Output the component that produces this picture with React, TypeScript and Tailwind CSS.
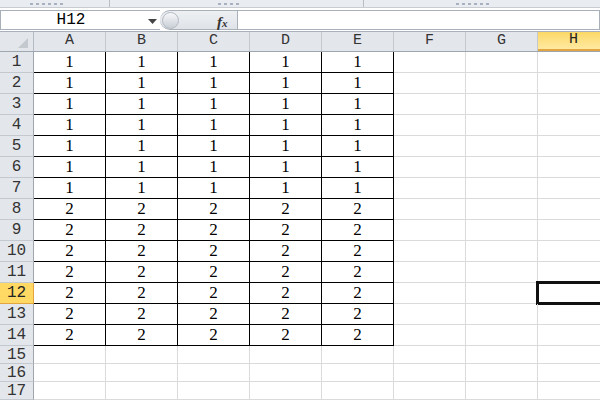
import React from "react";

const cols = ["A", "B", "C", "D", "E", "F", "G", "H"];
const rows = Array.from({ length: 17 }, (_, i) => i + 1);

const MONO = '"Liberation Mono", "Courier New", "DejaVu Sans Mono", monospace';
const SERIF = '"Liberation Serif", "Times New Roman", "DejaVu Serif", serif';

function Marks({ left, n }: { left: number; n: number }) {
  return (
    <div className="absolute top-[3px] flex gap-[3px]" style={{ left }}>
      {Array.from({ length: n }, (_, i) => (
        <div key={i} className="w-[3px] h-[2px] bg-[#a8b1bf]" />
      ))}
    </div>
  );
}

export default function App() {
  return (
    <div className="w-[600px] h-[400px] overflow-hidden bg-white relative" style={{ fontFamily: MONO }}>
      {/* top strip */}
      <div className="h-[8px] flex bg-[#e9ecf1] border-b border-[#c9cdd3] overflow-hidden">
        <div className="w-[110px] border-r border-[#b8bec6] relative">
          <Marks left={30} n={6} />
        </div>
        <div className="w-[2px]" />
        <div className="w-[252px] border-r border-[#b8bec6] relative">
          <Marks left={106} n={4} />
        </div>
        <div className="flex-1 relative">
          <Marks left={92} n={6} />
        </div>
      </div>
      {/* formula bar */}
      <div className="h-[24px] flex items-start pt-[2px] border-b border-[#a9b0b9] bg-white">
        <div className="w-[160px] h-[20px] border border-[#a9b0b9] border-r-0 flex items-center relative bg-white">
          <div className="w-[140px] text-center text-[16px] text-black" style={{ fontFamily: MONO }}>H12</div>
          <svg width="9" height="5" className="absolute left-[147px] top-[8px]" viewBox="0 0 9 5">
            <path d="M0 0 L9 0 L4.5 5 Z" fill="#444" />
          </svg>
        </div>
        <div className="w-[77px] h-[20px] bg-gradient-to-b from-[#eef0f3] to-[#dfe3e8] border-y border-[#a9b0b9] rounded-l-[10px] relative flex items-center">
          <div className="absolute left-[2px] top-[1px] w-[17px] h-[17px] rounded-full bg-gradient-to-b from-[#f7f8fa] to-[#c9ced6] border border-[#b3b9c2]" />
          <span className="absolute left-[57px] top-[0px] text-[15px] italic font-bold text-[#333]" style={{ fontFamily: SERIF }}>
            f<span className="text-[11px]">x</span>
          </span>
        </div>
        <div className="flex-1 h-[20px] border border-[#a9b0b9] bg-white" />
      </div>
      {/* header row */}
      <div className="flex h-[20px] border-b border-[#9ea6b0] bg-[#e3e6eb]">
        <div className="w-[34px] shrink-0 border-r border-[#b5bbc3] relative bg-[#e3e6eb]">
          <svg width="10" height="10" className="absolute right-[5px] bottom-[3px]" viewBox="0 0 10 10">
            <path d="M10 0 L10 10 L0 10 Z" fill="#c4c9d0" />
          </svg>
        </div>
        {cols.map((c) => (
          <div
            key={c}
            style={{ fontFamily: MONO }}
            className={
              "w-[72px] shrink-0 border-r flex items-center justify-center text-[15px] " +
              (c === "H"
                ? "bg-gradient-to-b from-[#fbd865] to-[#ffe9a0] border-[#e8b44f] border-b-2 border-b-[#e2a540] text-[#222]"
                : "border-[#c4c9d0] text-[#333]")
            }
          >
            {c}
          </div>
        ))}
      </div>
      {/* rows */}
      {rows.map((r) => {
        const data = r <= 14;
        const val = r <= 7 ? "1" : "2";
        return (
          <div key={r} className={"flex " + (data ? "h-[21px]" : "h-[18px]")}>
            <div
              style={{ fontFamily: MONO }}
              className={
                "w-[34px] shrink-0 border-r border-b flex items-center justify-center text-[16px] " +
                (r === 12
                  ? "bg-[#ffd963] border-[#e2a540] text-[#222]"
                  : "bg-[#e3e6eb] border-[#c4c9d0] border-r-[#9ea6b0] text-[#333]")
              }
            >
              {r}
            </div>
            {cols.map((c, ci) => {
              const inData = data && ci < 5;
              return (
                <div
                  key={c}
                  style={{ fontFamily: SERIF }}
                  className={
                    "w-[72px] shrink-0 border-r border-b relative flex items-center justify-center text-[17px] text-black " +
                    (inData ? "border-black" : "border-[#dadada]")
                  }
                >
                  {inData ? val : ""}
                  {r === 12 && c === "H" && (
                    <div className="absolute left-[-2px] top-[-2px] right-[-2px] bottom-[-2px] border-[3px] border-[#111]" />
                  )}
                </div>
              );
            })}
          </div>
        );
      })}
    </div>
  );
}
